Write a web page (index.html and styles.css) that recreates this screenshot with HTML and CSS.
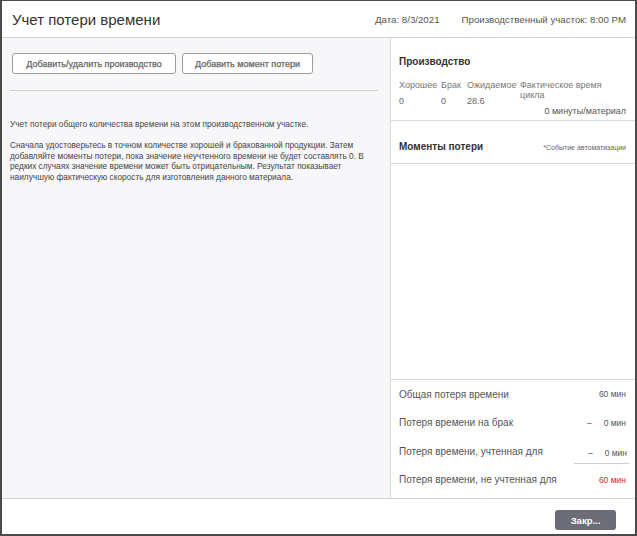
FILE: index.html
```html
<!DOCTYPE html>
<html lang="ru">
<head>
<meta charset="utf-8">
<title>Учет потери времени</title>
<link rel="stylesheet" href="styles.css">
</head>
<body>
<div class="dialog">
  <header class="head">
    <h1 class="title">Учет потери времени</h1>
    <div class="meta">
      <span>Дата: 8/3/2021</span>
      <span>Производственный участок: 8:00 PM</span>
    </div>
  </header>
  <main class="body">
    <section class="left">
      <div class="actions">
        <button class="btn">Добавить/удалить производство</button>
        <button class="btn">Добавить момент потери</button>
      </div>
      <hr class="rule">
      <p class="txt">Учет потери общего количества времени на этом производственном участке.</p>
      <p class="txt">Сначала удостоверьтесь в точном количестве хорошей и бракованной продукции. Затем добавляйте моменты потери, пока значение неучтенного времени не будет составлять 0. В редких случаях значение времени может быть отрицательным. Результат показывает наилучшую фактическую скорость для изготовления данного материала.</p>
    </section>
    <aside class="right">
      <div class="prod">
        <h2 class="sec">Производство</h2>
        <div class="ptable">
          <span class="ph c1">Хорошее</span>
          <span class="ph c2">Брак</span>
          <span class="ph c3">Ожидаемое</span>
          <span class="ph c4">Фактическое время цикла</span>
          <span class="pv">0</span>
          <span class="pv">0</span>
          <span class="pv">28.6</span>
          <span class="pv"></span>
        </div>
        <div class="rate">0 минуты/материал</div>
      </div>
      <div class="moments">
        <h2 class="sec">Моменты потери</h2>
        <span class="note">*Событие автоматизации</span>
      </div>
      <div class="list"></div>
      <div class="summary">
        <div class="row"><span>Общая потеря времени</span><span class="val">60 мин</span></div>
        <div class="row"><span>Потеря времени на брак</span><span class="val"><span class="dash">–</span>0 мин</span></div>
        <div class="row"><span>Потеря времени, учтенная для</span><span class="val field"><span class="dash">–</span>0 мин</span></div>
        <div class="row"><span>Потеря времени, не учтенная для</span><span class="val red">60 мин</span></div>
      </div>
    </aside>
  </main>
  <footer class="foot">
    <button class="close">Закр...</button>
  </footer>
</div>
</body>
</html>
```
FILE: styles.css
```css
* { box-sizing: border-box; }
html, body { margin: 0; padding: 0; background: #fff; }
body { font-family: "Liberation Sans", Arial, sans-serif; color: #555; }

.dialog {
  width: 637px;
  height: 536px;
  border-style: solid;
  border-color: #4a4a4a;
  border-width: 1px 2px 2px 2px;
  display: flex;
  flex-direction: column;
  background: #fff;
}

.head {
  height: 37px;
  flex: 0 0 37px;
  border-bottom: 1px solid #d4d4d4;
  display: flex;
  align-items: center;
  justify-content: space-between;
  padding: 0 9px 0 10px;
}
.title {
  margin: 0;
  font-size: 15px;
  font-weight: normal;
  color: #333;
}
.meta {
  display: flex;
  gap: 22px;
  font-size: 9.7px;
  color: #555;
  padding-top: 1px;
}

.body {
  flex: 1;
  display: flex;
  min-height: 0;
}
.left {
  width: 389px;
  flex: 0 0 389px;
  background: #f7f7f9;
  border-right: 1px solid #dcdcdc;
  padding: 15px 10px 0 8px;
}
.actions {
  display: flex;
  gap: 6px;
  padding-left: 2px;
}
.btn {
  height: 21px;
  padding: 0;
  border: 1px solid #9c9c9c;
  border-radius: 3px;
  background: #fff;
  font-family: "Liberation Sans", Arial, sans-serif;
  font-size: 9px;
  font-weight: normal;
  -webkit-text-stroke: 0.25px #666;
  color: #666;
  white-space: nowrap;
}
.btn:first-child { width: 164px; }
.btn:last-child { width: 131px; }
.rule {
  margin: 16px 0 0 0;
  border: 0;
  border-top: 1px solid #cfcfcf;
  width: 368px;
}
.txt {
  margin: 0;
  font-size: 8.3px;
  line-height: 10.4px;
  color: #444;
}
.txt:first-of-type { margin-top: 28px; }
.txt + .txt { margin-top: 11px; }

.right {
  flex: 1;
  display: flex;
  flex-direction: column;
  min-width: 0;
}
.prod {
  padding: 18px 9px 3px 8px;
  border-bottom: 1px solid #dcdcdc;
}
.sec {
  margin: 0;
  font-size: 10px;
  line-height: 12px;
  font-weight: bold;
  color: #333;
}
.ptable {
  display: grid;
  grid-template-columns: 42px 26px 53px 1fr;
  margin-top: 12px;
  font-size: 9px;
  line-height: 10px;
  color: #777;
}
.ph { align-self: start; }
.c4 { max-width: 90px; }
.pv { color: #666; margin-top: -4px; }
.rate {
  text-align: right;
  font-size: 9px;
  color: #555;
  line-height: 11px;
}
.moments {
  height: 43px;
  border-bottom: 1px solid #dcdcdc;
  display: flex;
  align-items: center;
  justify-content: space-between;
  padding: 10px 9px 0 8px;
}
.note { font-size: 7px; color: #666; }
.list { flex: 1; border-bottom: 1px solid #dcdcdc; }
.summary { padding: 0 9px 4px 8px; }
.row {
  height: 28.5px;
  display: flex;
  align-items: center;
  justify-content: space-between;
  font-size: 10px;
  color: #555;
}
.val { font-size: 8.5px; color: #555; display: flex; align-items: center; }
.dash { margin-right: 12px; }
.field {
  border-bottom: 1px solid #cfcfcf;
  padding: 0 2px 5px 14px;
  margin: 10px -3px 0 0;
}
.red { color: #e0262a; }

.foot {
  flex: 0 0 36px;
  border-top: 1px solid #d4d4d4;
  display: flex;
  justify-content: flex-end;
  align-items: flex-start;
  padding: 11px 19px 0 0;
}
.close {
  width: 61px;
  height: 20px;
  border: 0;
  border-radius: 3px;
  background: #6d6d78;
  color: #fff;
  font-family: "Liberation Sans", Arial, sans-serif;
  font-size: 9.5px;
  font-weight: bold;
}
```
